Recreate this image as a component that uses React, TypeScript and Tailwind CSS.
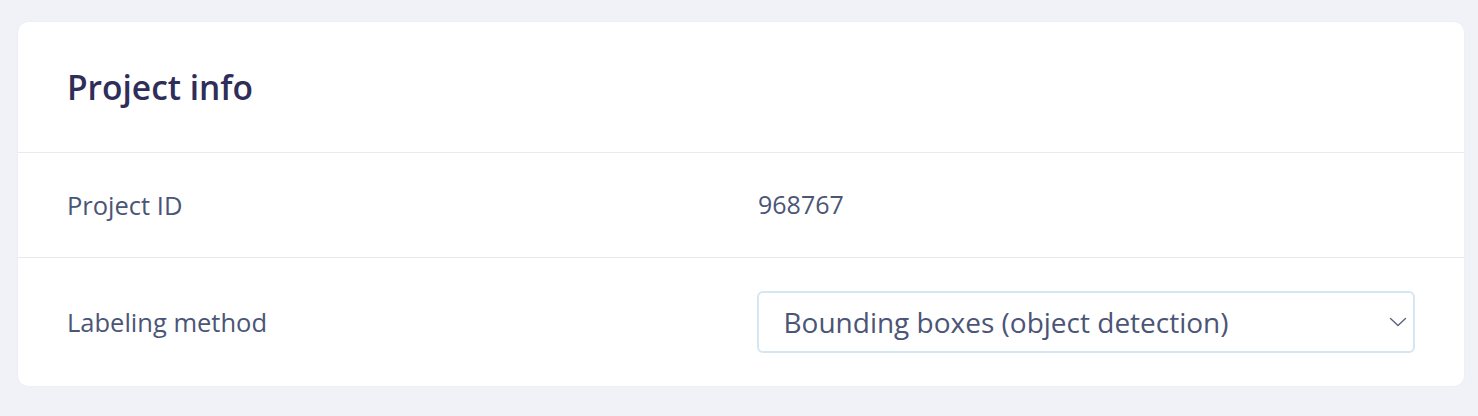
const App = () => {
  return (
    <div
      className="w-full min-h-[416px] bg-[#f1f2f8] pt-[22px] pl-[18px] pr-[14px]"
      style={{ fontFamily: '"Open Sans", sans-serif' }}
    >
      <div className="bg-white rounded-[10px] shadow-[0_0_2px_rgba(40,40,90,0.06)]">
        {/* Header */}
        <div className="h-[131px] flex items-center px-[49px] border-b border-[#e9eaef]">
          <h2 className="text-[33.5px] font-semibold text-[#2f2d59] leading-none mt-[2px]">Project info</h2>
        </div>

        {/* Project ID */}
        <div className="h-[105px] flex items-center px-[49px] border-b border-[#e9eaef]">
          <div className="w-[691px] text-[25.5px] text-[#4b5576]">Project ID</div>
          <div className="text-[25px] text-[#4b5576]">968767</div>
        </div>

        {/* Labeling method */}
        <div className="h-[128px] flex items-center px-[49px]">
          <div className="w-[691px] text-[25.5px] text-[#4b5576]">Labeling method</div>
          <div className="w-[658px] h-[62px] rounded-md border-2 border-[#d3e6f1] flex items-center justify-between pl-[24px] pr-[6px]">
            <span className="text-[28px] text-[#4b5576]">Bounding boxes (object detection)</span>
            <svg width="18" height="10" viewBox="0 0 18 10" fill="none">
              <polyline
                points="1.5,1.5 9,8.5 16.5,1.5"
                stroke="#5b6282"
                strokeWidth="1.4"
                strokeLinecap="round"
                strokeLinejoin="round"
              />
            </svg>
          </div>
        </div>
      </div>
    </div>
  );
};

export default App;
